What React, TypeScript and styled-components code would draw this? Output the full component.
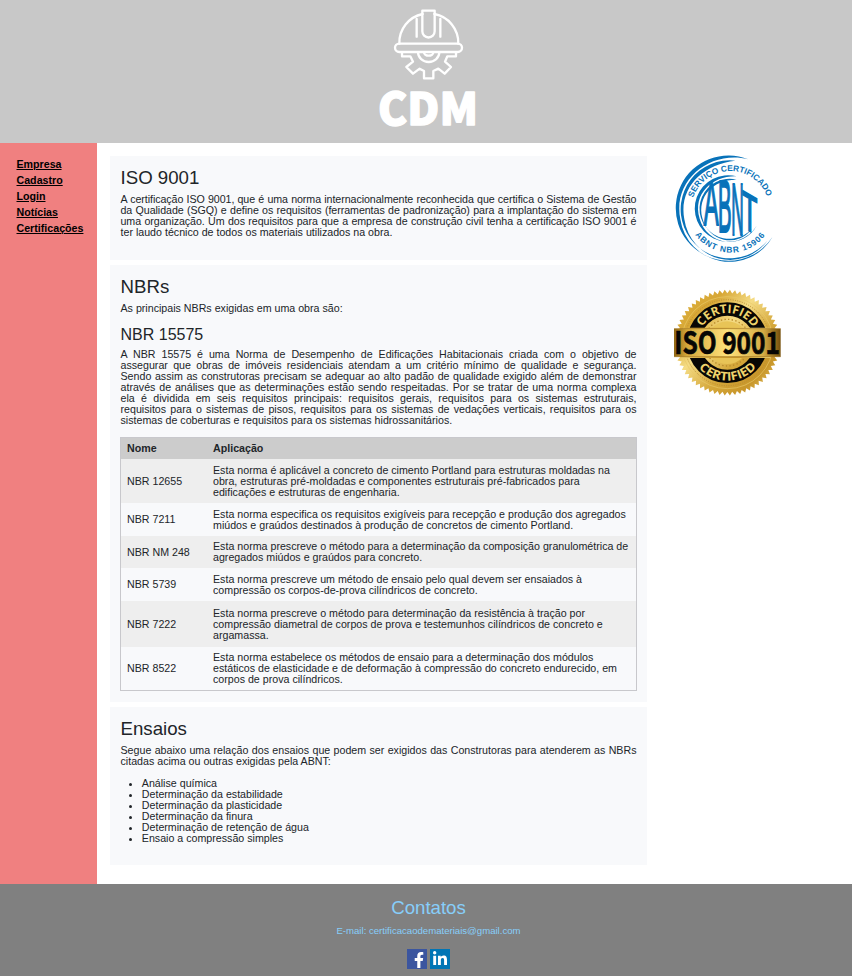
import React from "react";
import styled, { createGlobalStyle } from "styled-components";
import { FaFacebookF, FaLinkedinIn } from "react-icons/fa";

const GlobalStyle = createGlobalStyle`
  *, *::before, *::after { box-sizing: border-box; }
  body {
    margin: 0;
    background: #fff;
    color: #212529;
    font-family: "Liberation Sans", Arial, sans-serif;
    font-size: 10.667px;
    line-height: 11px;
  }
`;

const Page = styled.div`
  display: flex;
  flex-direction: column;
  height: 976px;
  overflow: hidden;
`;

const Header = styled.header`
  display: flex;
  justify-content: center;
  flex: 0 0 143px;
  background: #c8c8c8;
`;

const HeaderLogo = styled.svg`
  width: 140px;
  height: 143px;
  margin-left: 8px;
`;

const Body = styled.div`
  display: grid;
  grid-template-columns: 97px 563px 1fr;
  flex: 0 0 741px;
`;

const Sidebar = styled.nav`
  display: flex;
  flex-direction: column;
  align-items: flex-start;
  padding: 13px 0 0 16.5px;
  background: #f08080;
`;

const SideLink = styled.a`
  color: #000;
  font-weight: bold;
  line-height: 16px;
  text-decoration: underline;
`;

const Content = styled.main`
  display: flex;
  flex-direction: column;
  gap: 5px;
  padding: 13px 13px 0;
`;

const Card = styled.section<{ $height: number }>`
  height: ${(p) => p.$height}px;
  padding: 10px 10.5px 0;
  background: #f8f9fb;
`;

const Title = styled.h2`
  margin: 0 0 5px;
  font-size: 18.667px;
  font-weight: 400;
  line-height: 23px;
`;

const Subtitle = styled.h3`
  margin: 11px 0 4px;
  font-size: 16px;
  font-weight: 400;
  line-height: 20px;
`;

const Paragraph = styled.p`
  margin: 0;
  text-align: justify;
`;

const Tight = styled.span`
  letter-spacing: -0.06px;
`;

const Table = styled.table`
  width: 517px;
  margin: 11px 0 0 -0.5px;
  border: 1px solid #c8c8cc;
  border-spacing: 0;
  table-layout: fixed;
`;

const HeadCell = styled.th<{ $width?: number }>`
  width: ${(p) => (p.$width ? `${p.$width}px` : "auto")};
  height: 21px;
  padding: 0 6px;
  background: #ccc;
  text-align: left;
`;

const Row = styled.tr<{ $height: number }>`
  height: ${(p) => p.$height}px;
  &:nth-child(odd) { background: #eee; }
`;

const Cell = styled.td`
  padding: 0 6px;
  vertical-align: middle;
`;

const List = styled.ul`
  margin: 11px 0 0;
  padding-left: 21.3px;
`;

const Seals = styled.aside`
  display: flex;
  flex-direction: column;
  gap: 5px;
  padding-top: 2px;
`;

const Seal = styled.svg`
  display: block;
  width: 130px;
  height: 130px;
  overflow: visible;
`;

const Footer = styled.footer`
  display: flex;
  flex-direction: column;
  align-items: center;
  flex: 0 0 92px;
  padding: 12px 0 0 5px;
  background: #808080;
  color: #87cefa;
`;

const Mail = styled.p`
  margin: 1px 0 13px;
  font-size: 9.6px;
`;

const Socials = styled.div`
  display: flex;
  gap: 3px;
`;

const Social = styled.a<{ $bg: string; $inset: string }>`
  display: flex;
  align-items: flex-end;
  justify-content: flex-end;
  width: 20px;
  height: 20px;
  padding: ${(p) => p.$inset};
  background: ${(p) => p.$bg};
  color: #fff;
`;

const links = ["Empresa", "Cadastro", "Login", "Notícias", "Certificações"];

const norms = [
  { name: "NBR 12655", height: 44, lines: ["Esta norma é aplicável a concreto de cimento Portland para estruturas moldadas na", "obra, estruturas pré-moldadas e componentes estruturais pré-fabricados para", "edificações e estruturas de engenharia."] },
  { name: "NBR 7211", height: 33, lines: ["Esta norma especifica os requisitos exigíveis para recepção e produção dos agregados", "miúdos e graúdos destinados à produção de concretos de cimento Portland."] },
  { name: "NBR NM 248", height: 32, lines: ["Esta norma prescreve o método para a determinação da composição granulométrica de", "agregados miúdos e graúdos para concreto."] },
  { name: "NBR 5739", height: 33, lines: ["Esta norma prescreve um método de ensaio pelo qual devem ser ensaiados à", "compressão os corpos-de-prova cilíndricos de concreto."] },
  { name: "NBR 7222", height: 46, lines: ["Esta norma prescreve o método para determinação da resistência à tração por", "compressão diametral de corpos de prova e testemunhos cilíndricos de concreto e", "argamassa."] },
  { name: "NBR 8522", height: 43, lines: ["Esta norma estabelece os métodos de ensaio para a determinação dos módulos", "estáticos de elasticidade e de deformação à compressão do concreto endurecido, em", "corpos de prova cilíndricos."] },
];

const tests = ["Análise química", "Determinação da estabilidade", "Determinação da plasticidade", "Determinação da finura", "Determinação de retenção de água", "Ensaio a compressão simples"];

const CdmLogo = () => (
  <HeaderLogo viewBox="0 0 420 429" fill="none" stroke="#fff" strokeWidth="7" strokeLinejoin="round" strokeLinecap="round">
    <path d="M118 131a88 88 0 0 1 70-89M223 42a88 88 0 0 1 72 89" />
    <path d="M187 32h37v62a18.500 18.500 0 0 1-37 0zM170 57v53M241 57v53" />
    <rect x="105" y="131" width="201" height="25" rx="12.500" />
    <path d="M126 157v12h25l8 16-20 16 20 20 20-15 13 7v22h28v-22l15-7 19 15 19-20-18-16 7-16h26v-12" />
    <path d="M174 157a32 29 0 0 0 64 0M192 157a14 10 0 0 0 28 0" />
    <text x="54" y="375" textLength="300" lengthAdjust="spacingAndGlyphs" fontFamily="Noto Sans CJK SC, sans-serif" fontWeight="900" fontSize="133" fill="#fff" stroke="#fff" strokeWidth="4">CDM</text>
  </HeaderLogo>
);

const AbntSeal = () => (
  <Seal viewBox="0 0 390 390" fill="#0872b9">
    <defs>
      <path id="abntTopText" d="M93.500 195.500a117.500 117.500 0 0 1 235 0" />
      <path id="abntBottomText" d="M80 192a131 131 0 0 0 262 0" />
    </defs>
    <path d="M265 43A158 158 0 1 0 338 275A149 149 0 0 1 61 223C37 104 152 15 265 43Z" />
    <path d="M226 47A147 147 0 1 0 322 287A139 143 0 0 1 73 223C55 128 128 58 226 47Z" />
    <path d="M230 94A100 100 0 1 0 290 242A93 95 0 0 1 119 221C96 143 162 91 230 94Z" />
    <path d="M230 104A90 90 0 1 0 276 251A84 87 0 0 1 127 219C111 154 160 103 230 104Z" />
    <g fontFamily="Liberation Sans, Arial, sans-serif" fontWeight="bold">
      <text fontSize="25"><textPath href="#abntTopText" startOffset="38" textLength="290">SERVIÇO CERTIFICADO</textPath></text>
      <text fontSize="25"><textPath href="#abntBottomText" startOffset="82" textLength="244">ABNT NBR 15906</textPath></text>
      <g fontWeight="normal" fontSize="100" stroke="#0872b9" strokeWidth="3">
        <text transform="translate(131 239) scale(.67 1.900)">A</text>
        <text transform="translate(174 260) scale(.61 2.200)">B</text>
        <text transform="translate(214 270) scale(.52 2.240)">N</text>
        <text transform="matrix(.76 .43 0 1.600 246 246)">T</text>
      </g>
    </g>
  </Seal>
);

const gear = Array.from({ length: 128 }, (_, i) => {
  const angle = (i * Math.PI) / 64;
  const radius = i % 2 ? 159 : 148;
  return `${202 + Math.cos(angle) * radius},${188 + Math.sin(angle) * radius}`;
}).join(" ");

const IsoSeal = () => (
  <Seal viewBox="0 0 390 390">
    <defs>
      <linearGradient id="gold" x1="0" y1="0" x2="1" y2="1">
        <stop offset="0" stopColor="#dfb443" />
        <stop offset=".24" stopColor="#d7a735" />
        <stop offset=".42" stopColor="#f5dc85" />
        <stop offset=".63" stopColor="#d5a83b" />
        <stop offset=".8" stopColor="#c8962a" />
        <stop offset="1" stopColor="#eed375" />
      </linearGradient>
      <linearGradient id="band">
        <stop offset="0" stopColor="#8f6715" />
        <stop offset=".12" stopColor="#d4a73a" />
        <stop offset=".5" stopColor="#ffe27b" />
        <stop offset=".84" stopColor="#d4aa43" />
        <stop offset="1" stopColor="#76500b" />
      </linearGradient>
      <path id="isoTopText" d="M113 188a89 89 0 0 1 178 0" />
      <path id="isoBottomText" d="M88 188a114 114 0 0 0 228 0" />
    </defs>
    <polygon points={gear} fill="url(#gold)" />
    <g fill="none">
      <circle cx="202" cy="188" r="138" stroke="#e9c968" strokeWidth="2" />
      <circle cx="202" cy="188" r="129" stroke="#b98d33" strokeWidth="3" strokeDasharray="3 4" />
      <circle cx="202" cy="188" r="101" stroke="#080704" strokeWidth="40" />
      <circle cx="202" cy="188" r="70" stroke="#b88a2b" strokeWidth="4" strokeDasharray="4 7" />
    </g>
    <circle cx="202" cy="188" r="64" fill="#e8c457" />
    <path d="M72 143h260v91H72z" fill="url(#gold)" />
    <path d="M42 146h320v84H42z" fill="url(#band)" />
    <path d="M42 146h320M42 230h320" stroke="#9e7422" strokeWidth="2" />
    <g fontFamily="Open Sans, sans-serif" fontWeight="bold">
      <g fill="#efd36c" fontSize="36">
        <text><textPath href="#isoTopText" startOffset="50" textLength="182" lengthAdjust="spacingAndGlyphs">CERTIFIED</textPath></text>
        <text><textPath href="#isoBottomText" startOffset="82" textLength="196" lengthAdjust="spacingAndGlyphs">CERTIFIED</textPath></text>
      </g>
      <text x="43" y="221" fontSize="93" textLength="317" lengthAdjust="spacingAndGlyphs" fill="#070604" stroke="#070604" strokeWidth="2" fontFamily="Noto Sans CJK SC, sans-serif">ISO 9001</text>
    </g>
  </Seal>
);

export default function App() {
  return (
    <Page>
      <GlobalStyle />
      <Header><CdmLogo /></Header>
      <Body>
        <Sidebar>{links.map((link) => <SideLink key={link} href="#">{link}</SideLink>)}</Sidebar>
        <Content>
          <Card $height={104}>
            <Title>ISO 9001</Title>
            <Paragraph><Tight>A certificação ISO 9001, que é uma norma internacionalmente reconhecida que certifica o Sistema de Gestão da Qualidade (SGQ) e define os requisitos (ferramentas de padronização) para a implantação do sistema em uma organização. Um dos requisitos para que a empresa de construção civil tenha a certificação ISO 9001 é </Tight>ter laudo técnico de todos os materiais utilizados na obra.</Paragraph>
          </Card>
          <Card $height={437}>
            <Title>NBRs</Title>
            <Paragraph>As principais NBRs exigidas em uma obra são:</Paragraph>
            <Subtitle>NBR 15575</Subtitle>
            <Paragraph>A NBR 15575 é uma Norma de Desempenho de Edificações Habitacionais criada com o objetivo de assegurar que obras de imóveis residenciais atendam a um critério mínimo de qualidade e segurança. Sendo assim as construtoras precisam se adequar ao alto padão de qualidade exigido além de demonstrar através de análises que as determinações estão sendo respeitadas. Por se tratar de uma norma complexa ela é dividida em seis requisitos principais: requisitos gerais, requisitos para os sistemas estruturais, requisitos para o sistemas de pisos, requisitos para os sistemas de vedações verticais, requisitos para os sistemas de coberturas e requisitos para os sistemas hidrossanitários.</Paragraph>
            <Table>
              <thead><tr><HeadCell $width={86}>Nome</HeadCell><HeadCell>Aplicação</HeadCell></tr></thead>
              <tbody>
                {norms.map((norm) => (
                  <Row key={norm.name} $height={norm.height}>
                    <Cell>{norm.name}</Cell>
                    <Cell>{norm.lines.map((line, i) => <React.Fragment key={line}>{i > 0 && <br />}{line}</React.Fragment>)}</Cell>
                  </Row>
                ))}
              </tbody>
            </Table>
          </Card>
          <Card $height={158}>
            <Title>Ensaios</Title>
            <Paragraph>Segue abaixo uma relação dos ensaios que podem ser exigidos das Construtoras para atenderem as NBRs citadas acima ou outras exigidas pela ABNT:</Paragraph>
            <List>{tests.map((test) => <li key={test}>{test}</li>)}</List>
          </Card>
        </Content>
        <Seals><AbntSeal /><IsoSeal /></Seals>
      </Body>
      <Footer>
        <Title>Contatos</Title>
        <Mail>E-mail: certificacaodemateriais@gmail.com</Mail>
        <Socials>
          <Social $bg="#3b559f" $inset="0 0 1px" href="#" aria-label="Facebook"><FaFacebookF size={16} /></Social>
          <Social $bg="#0075b5" $inset="0 2px 2px 0" href="#" aria-label="LinkedIn"><FaLinkedinIn size={16} /></Social>
        </Socials>
      </Footer>
    </Page>
  );
}
